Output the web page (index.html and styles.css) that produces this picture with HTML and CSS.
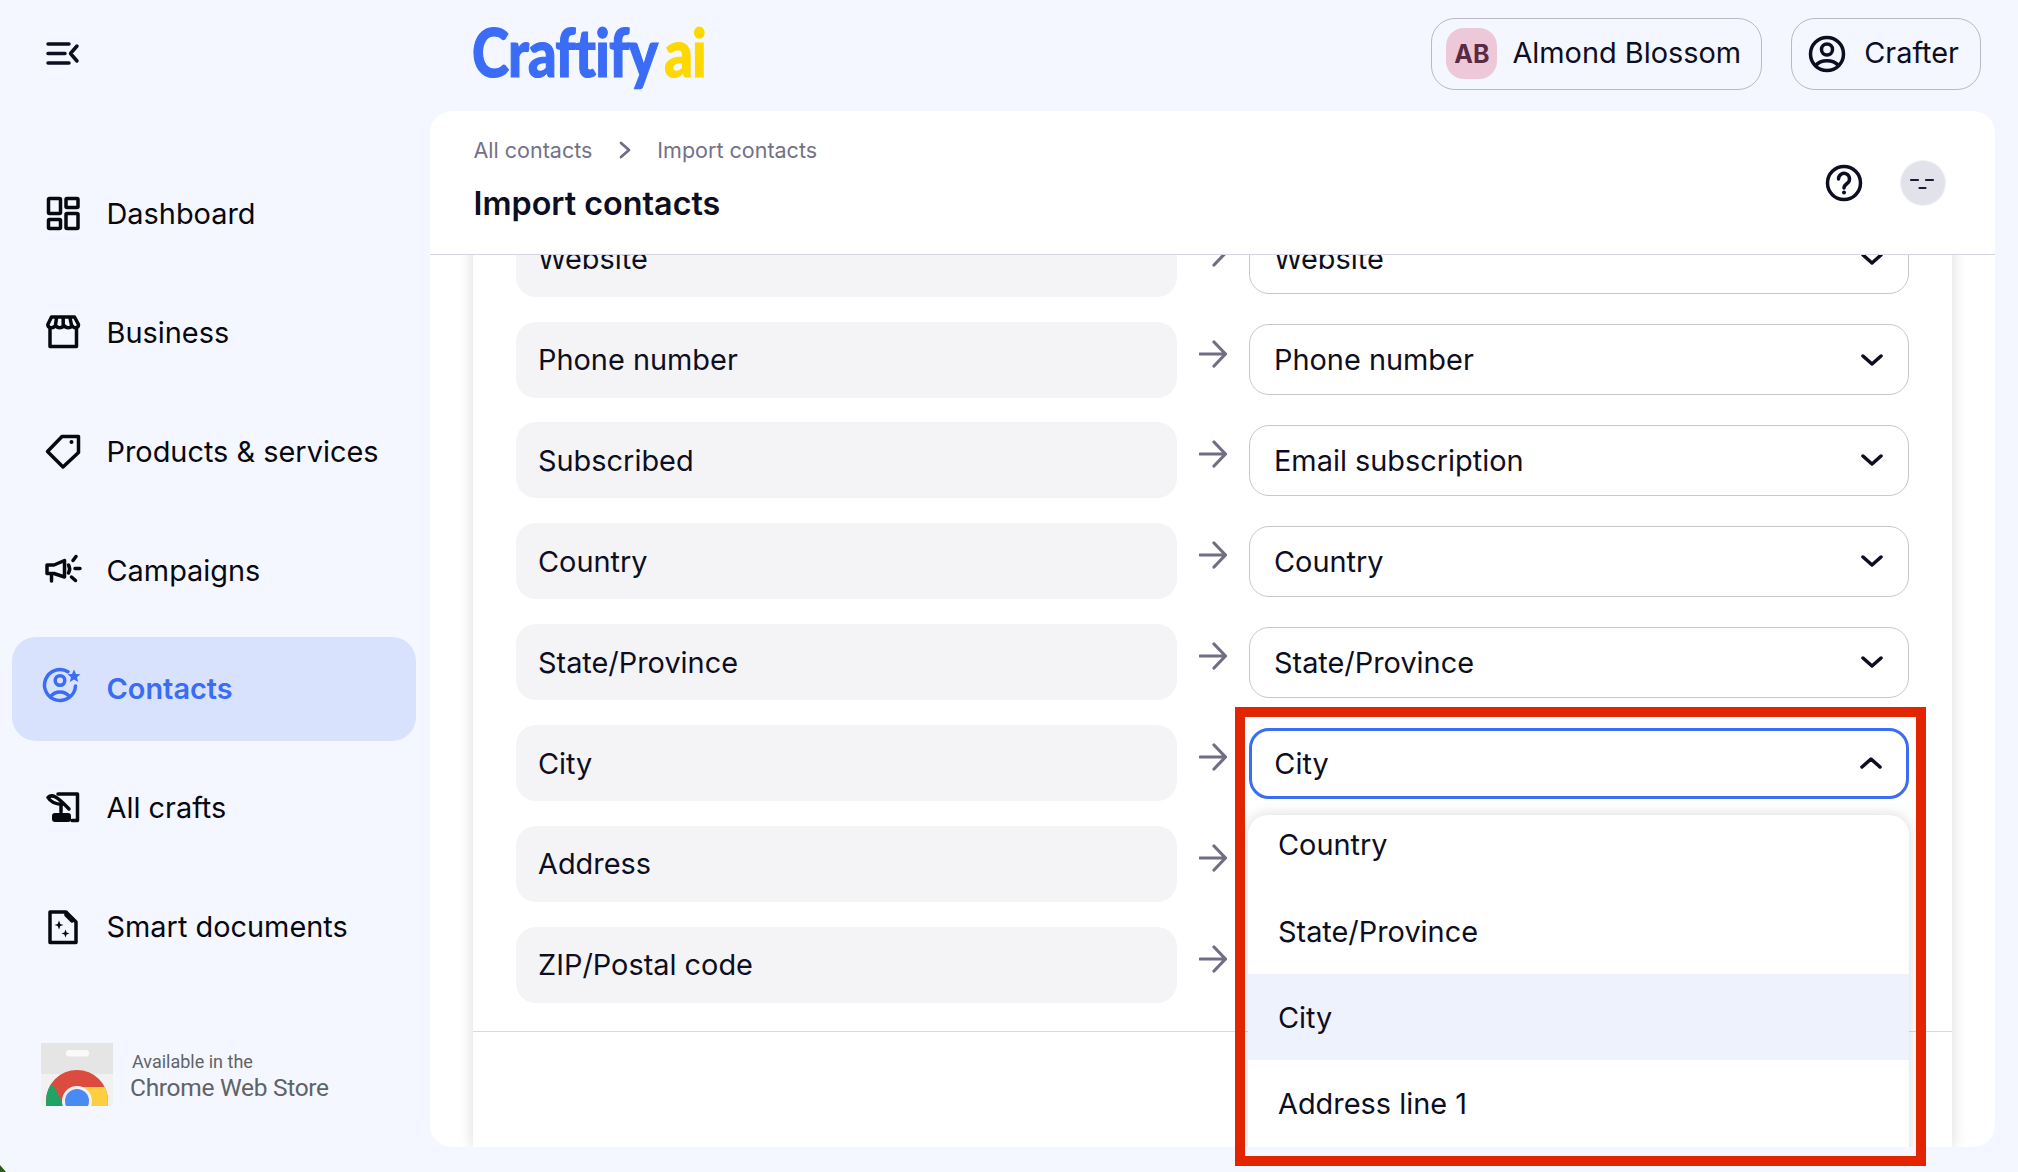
FILE: index.html
```html
<!DOCTYPE html>
<html lang="en">
<head>
<meta charset="utf-8">
<title>Import contacts</title>
<link rel="stylesheet" href="styles.css">
</head>
<body>
<aside class="sidebar">
  <button class="collapse" aria-label="Collapse">
    <svg class="ico" viewBox="0 0 36 36"><path d="M3 9H24M3 18.500H20M3 28H24M32 11L25.500 18.500L32 26"/></svg>
  </button>
  <nav class="nav">
    <a class="nav-item">
      <svg class="ico" viewBox="0 0 36 36"><rect x="3.500" y="3.500" width="12" height="15" rx="1"/><rect x="21" y="3.500" width="12" height="9" rx="1"/><rect x="3.500" y="24.500" width="12" height="9" rx="1"/><rect x="21" y="18.500" width="12" height="15" rx="1"/></svg>
      <span>Dashboard</span>
    </a>
    <a class="nav-item">
      <svg class="ico" viewBox="0 0 36 36"><path d="M5 14V32.500H31.500V14M6.500 3H29.500L33.500 10.500C33.500 14.500 28.500 14.500 27 11.500C25.500 14.500 21 14.500 19 11.500C17 14.500 12.500 14.500 10.500 11.500C8.500 14.500 2.800 14.500 2.800 10.500ZM11.500 4L10.500 11M18.200 4V11M25 4L26.500 11"/></svg>
      <span>Business</span>
    </a>
    <a class="nav-item">
      <svg class="ico" viewBox="0 0 36 36"><path d="M17 3.500H33.500V19.500L18 34L2.500 18.500Z"/><circle class="solid" cx="26.500" cy="9" r="2"/></svg>
      <span>Products &amp; services</span>
    </a>
    <a class="nav-item">
      <svg class="ico" viewBox="0 0 36 36"><path d="M2 13H9L19.500 8.500V25L9 21.500H2ZM6.500 21.500V29M23.500 13C25 15.500 25 18.500 23.500 21M28 8.500L31 4.500M30 16.500H35M26.500 25L30.500 28.500"/></svg>
      <span>Campaigns</span>
    </a>
    <a class="nav-item active">
      <svg class="ico" viewBox="0 0 36 36"><path d="M23 0.700A15.500 15.500 0 1 0 30.500 15"/><circle cx="15" cy="9.500" r="4.800"/><path d="M5.500 25.500C10.500 19.500 19.500 19.500 24.500 25.500"/><path class="solid" d="M29 -1.500L31 3L35.500 3.300L32 6.300L33.200 11L29 8.500L24.800 11L26 6.300L22.500 3.300L27 3Z"/></svg>
      <span>Contacts</span>
    </a>
    <a class="nav-item">
      <svg class="ico" viewBox="0 0 36 36"><path d="M13 4H32.500V30.500H27M3 7.500C7 3.500 12 6.500 24 19M3 7.500C5 11 10 14 17 14.500M16 15V22"/><rect class="solid" x="7" y="23" width="19" height="9" rx="3"/></svg>
      <span>All crafts</span>
    </a>
    <a class="nav-item">
      <svg class="ico" viewBox="0 0 36 36"><path d="M5 3H21L31 13V33.500H5ZM21 3V6L27 12"/><path class="solid" d="M14 11.500L15.300 15L18.500 16L15.300 17L14 20.500L12.700 17L9.500 16L12.700 15ZM20.500 20.500L21.600 23.400L24.500 24.500L21.600 25.600L20.500 28.500L19.400 25.600L16.500 24.500L19.400 23.400Z"/></svg>
      <span>Smart documents</span>
    </a>
  </nav>
  <div class="store">
    <svg class="store-img" viewBox="0 0 72 63">
      <defs>
        <clipPath id="bag"><path d="M0 0H72V60Q72 63 69 63H3Q0 63 0 60Z"/></clipPath>
        <clipPath id="wheel"><circle cx="36" cy="58" r="31"/></clipPath>
      </defs>
      <g clip-path="url(#bag)">
        <rect class="bag-back" width="72" height="63"/>
        <rect class="bag-top" width="72" height="31"/>
        <rect class="bag-handle" x="25" y="7" width="23" height="6.500" rx="3.200"/>
        <g clip-path="url(#wheel)">
          <rect class="c-red" width="72" height="63"/>
          <rect class="c-yellow" x="36" y="44" width="36" height="19"/>
          <path class="c-green" d="M12.500 42L23 63H0V42Z"/>
        </g>
        <circle class="c-ring" cx="36" cy="58" r="15"/>
        <circle class="c-blue" cx="36" cy="58" r="12"/>
      </g>
    </svg>
    <div class="store-text">
      <span class="store-small">Available in the</span>
      <span class="store-big">Chrome Web Store</span>
    </div>
  </div>
</aside>

<main class="main">
  <header class="topbar">
    <div class="logo"><span class="logo-blue">Craftify</span><span class="logo-yellow">ai</span></div>
    <div class="top-actions">
      <button class="pill">
        <span class="avatar">AB</span>
        <span>Almond Blossom</span>
      </button>
      <button class="pill pill-role">
        <svg class="ico" viewBox="0 0 36 36"><circle cx="18" cy="18" r="16.500"/><circle cx="18" cy="13.500" r="5.500"/><path d="M6.500 29.500C12 23 24 23 29.500 29.500"/></svg>
        <span>Crafter</span>
      </button>
    </div>
  </header>

  <section class="panel">
    <div class="panel-head">
      <div class="head-text">
        <div class="crumbs">
          <span>All contacts</span>
          <svg class="crumb-sep" viewBox="0 0 12 18"><path d="M2 2L10 9L2 16"/></svg>
          <span>Import contacts</span>
        </div>
        <h1 class="title">Import contacts</h1>
      </div>
      <div class="head-icons">
        <svg class="ico" viewBox="0 0 36 36"><circle cx="18" cy="18" r="16.500"/><path d="M12.500 14A5.500 5.500 0 1 1 21 18.500C19 20 18 21 18 23"/><circle class="solid" cx="18" cy="27.500" r="2"/></svg>
        <div class="face">
          <svg class="face-svg" viewBox="0 0 44 44"><path d="M10 19H17M25 19H32M18.500 27H24.500"/></svg>
        </div>
      </div>
    </div>

    <div class="scroll">
      <div class="card">
        <div class="rows">
          <div class="row">
            <div class="source">Website</div>
            <svg class="arrow" viewBox="0 0 28 28"><path d="M1 14H26M15 2L26.500 14L15 26"/></svg>
            <div class="select"><span>Website</span><svg class="chev" viewBox="0 0 22 14"><path d="M2 3L11 11L20 3"/></svg></div>
          </div>
          <div class="row">
            <div class="source">Phone number</div>
            <svg class="arrow" viewBox="0 0 28 28"><path d="M1 14H26M15 2L26.500 14L15 26"/></svg>
            <div class="select"><span>Phone number</span><svg class="chev" viewBox="0 0 22 14"><path d="M2 3L11 11L20 3"/></svg></div>
          </div>
          <div class="row">
            <div class="source">Subscribed</div>
            <svg class="arrow" viewBox="0 0 28 28"><path d="M1 14H26M15 2L26.500 14L15 26"/></svg>
            <div class="select"><span>Email subscription</span><svg class="chev" viewBox="0 0 22 14"><path d="M2 3L11 11L20 3"/></svg></div>
          </div>
          <div class="row">
            <div class="source">Country</div>
            <svg class="arrow" viewBox="0 0 28 28"><path d="M1 14H26M15 2L26.500 14L15 26"/></svg>
            <div class="select"><span>Country</span><svg class="chev" viewBox="0 0 22 14"><path d="M2 3L11 11L20 3"/></svg></div>
          </div>
          <div class="row">
            <div class="source">State/Province</div>
            <svg class="arrow" viewBox="0 0 28 28"><path d="M1 14H26M15 2L26.500 14L15 26"/></svg>
            <div class="select"><span>State/Province</span><svg class="chev" viewBox="0 0 22 14"><path d="M2 3L11 11L20 3"/></svg></div>
          </div>
          <div class="row">
            <div class="source">City</div>
            <svg class="arrow" viewBox="0 0 28 28"><path d="M1 14H26M15 2L26.500 14L15 26"/></svg>
            <div class="select open">
              <span>City</span><svg class="chev" viewBox="0 0 22 14"><path d="M2 11L11 3L20 11"/></svg>
              <ul class="menu">
                <li class="menu-item">Country</li>
                <li class="menu-item">State/Province</li>
                <li class="menu-item selected">City</li>
                <li class="menu-item">Address line 1</li>
              </ul>
            </div>
          </div>
          <div class="row">
            <div class="source">Address</div>
            <svg class="arrow" viewBox="0 0 28 28"><path d="M1 14H26M15 2L26.500 14L15 26"/></svg>
            <div class="select"></div>
          </div>
          <div class="row">
            <div class="source">ZIP/Postal code</div>
            <svg class="arrow" viewBox="0 0 28 28"><path d="M1 14H26M15 2L26.500 14L15 26"/></svg>
            <div class="select"></div>
          </div>
        </div>
        <div class="card-foot"></div>
      </div>
    </div>
  </section>
</main>
<div class="callout"></div>
<div class="corner"></div>
</body>
</html>
```
FILE: styles.css
```css
* { box-sizing: border-box; }
html, body { margin: 0; height: 100%; }
body {
  width: 2018px;
  height: 1172px;
  overflow: hidden;
  position: relative;
  display: grid;
  grid-template-columns: 430px 1fr;
  background: #f4f7ff;
  font-family: Inter, "Liberation Sans", sans-serif;
  color: #0d0e22;
}
.ico { width: 36px; height: 36px; flex: none; overflow: visible; fill: none; stroke: currentColor; stroke-width: 3.500; stroke-linecap: round; stroke-linejoin: round; }
.ico .solid { fill: currentColor; stroke: none; }

/* sidebar */
.sidebar { display: flex; flex-direction: column; padding: 35px 14px 0 12px; color: #08080f; }
.collapse { border: 0; background: none; padding: 0 0 0 33px; margin: 0; height: 36px; width: 100%; display: flex; color: #0d0e22; }
.nav { display: flex; flex-direction: column; gap: 14.900px; margin-top: 90.400px; }
.nav-item { display: flex; align-items: center; gap: 25.500px; height: 104px; padding-left: 33px; border-radius: 24px; font-size: 28.900px; }
.nav-item.active { background: #d9e2fd; color: #3a6cf4; font-weight: 600; }
.store { display: flex; align-items: center; gap: 16px; margin: 64.500px 0 0 29px; }
.store-img { width: 72px; height: 63px; flex: none; }
.bag-back { fill: #f1f1f1; }
.bag-top { fill: #e5e5e5; }
.bag-handle { fill: #fafafa; }
.c-red { fill: #db4c3f; }
.c-yellow { fill: #ffcd40; }
.c-green { fill: #1fa463; }
.c-ring { fill: #f1f1f1; }
.c-blue { fill: #4a8af4; }
.store-text { display: flex; flex-direction: column; color: #5f6368; font-family: Roboto, sans-serif; margin-left: 1px; padding-top: 3px; }
.store-small { font-size: 18px; line-height: 24px; margin-left: 2px; }
.store-big { font-size: 24.500px; line-height: 28px; letter-spacing: -0.3px; }

/* top */
.main { display: flex; flex-direction: column; min-width: 0; padding-right: 23px; }
.topbar { height: 111px; flex: none; display: flex; align-items: flex-start; justify-content: space-between; padding-left: 42px; padding-right: 14px; }
.logo { margin-top: 12px; font-family: Lato, sans-serif; font-weight: 900; font-size: 66px; line-height: 80px; display: flex; gap: 8px; letter-spacing: -1px; transform: scaleX(0.85); transform-origin: left center; -webkit-text-stroke: 1.200px currentColor; }
.logo-blue { color: #3a6cf6; }
.logo-yellow { color: #ffd800; }
.top-actions { display: flex; gap: 29px; margin-top: 18px; }
.pill { height: 71.500px; display: flex; align-items: center; gap: 15px; padding: 0 20px 2px 14px; border: 1.300px solid #b8bac8; border-radius: 24px; background: transparent; font: inherit; font-size: 28.900px; color: #0d0e22; }
.pill-role { padding: 0 21px 2px 17px; gap: 19px; }
.pill .avatar, .pill .ico { margin-top: 2px; }
.avatar { width: 51px; height: 51px; border-radius: 18px; background: #ecc8d8; color: #5a2a44; font-weight: 700; font-size: 25px; display: flex; align-items: center; justify-content: center; }

/* panel */
.panel { height: 1036px; flex: none; background: #fff; border-radius: 22px; overflow: hidden; display: flex; flex-direction: column; }
.panel-head { height: 144px; flex: none; border-bottom: 1.300px solid #d5d5e0; display: flex; justify-content: space-between; padding: 0 50px 0 43.500px; }
.crumbs { display: flex; align-items: center; gap: 26.500px; margin-top: 24px; height: 30px; font-size: 21.500px; color: #72718a; }
.crumb-sep { width: 12px; height: 18px; fill: none; stroke: #706d85; stroke-width: 2.800; stroke-linecap: round; stroke-linejoin: round; }
.title { margin: 16.500px 0 0; font-size: 32.300px; line-height: 44px; font-weight: 600; color: #0d0e22; }
.head-icons { display: flex; align-items: center; gap: 39px; }
.face { width: 44px; height: 44px; border-radius: 50%; background: #e2e3ea; box-shadow: 0 0 0 1px #f0f0f3; }
.face-svg { width: 44px; height: 44px; display: block; fill: none; stroke: #1a1b38; stroke-width: 2.200; stroke-linecap: round; }

.scroll { flex: 1; min-height: 0; overflow: hidden; padding: 0 43px; }
.card { margin-top: -34.400px; height: calc(100% + 34.400px); background: #fff; box-shadow: 0 0 14px rgba(20, 20, 40, 0.16); }
.rows { display: flex; flex-direction: column; gap: 24.900px; padding: 0 43px 28px; }
.row { display: grid; grid-template-columns: 661px 72px 660px; align-items: center; height: 76px; }
.source { height: 76px; display: flex; align-items: center; padding-left: 22px; background: #f4f4f7; border-radius: 20px; font-size: 28.900px; }
.arrow { width: 28px; height: 28px; justify-self: center; margin-bottom: 12px; fill: none; stroke: #706d85; stroke-width: 3.200; stroke-linecap: round; stroke-linejoin: round; }
.select { position: relative; height: 71px; display: flex; align-items: center; justify-content: space-between; padding: 0 25.500px 0 24px; background: #fff; border: 1.300px solid #c8c8cc; border-radius: 20px; font-size: 28.900px; }
.select.open { border: 3px solid #3a6cf4; padding: 0 23.800px 0 22.300px; z-index: 2; }
.chev { width: 22px; height: 14px; fill: none; stroke: #0d0e22; stroke-width: 3.500; stroke-linecap: round; stroke-linejoin: round; }
.menu { position: absolute; left: -4px; top: 84px; width: 661px; height: 400px; margin: 0; padding: 0; list-style: none; background: #fff; border-radius: 20px; box-shadow: 0 0 14px rgba(20, 20, 40, 0.16); overflow: hidden; }
.menu-item { height: 86.300px; display: flex; align-items: center; padding-left: 30px; }
.menu-item:first-child { margin-top: -13px; }
.menu-item.selected { background: #eef2fd; }
.card-foot { border-top: 1.300px solid #d9d9e3; }

/* overlays */
.callout { position: absolute; left: 1235px; top: 707px; width: 691px; height: 459px; border: 10px solid #e32400; pointer-events: none; z-index: 3; }
.corner { position: absolute; left: 0; bottom: 0; width: 0; height: 0; border-style: solid; border-width: 7px 0 0 6px; border-color: transparent transparent transparent #2f5a1c; }
```
